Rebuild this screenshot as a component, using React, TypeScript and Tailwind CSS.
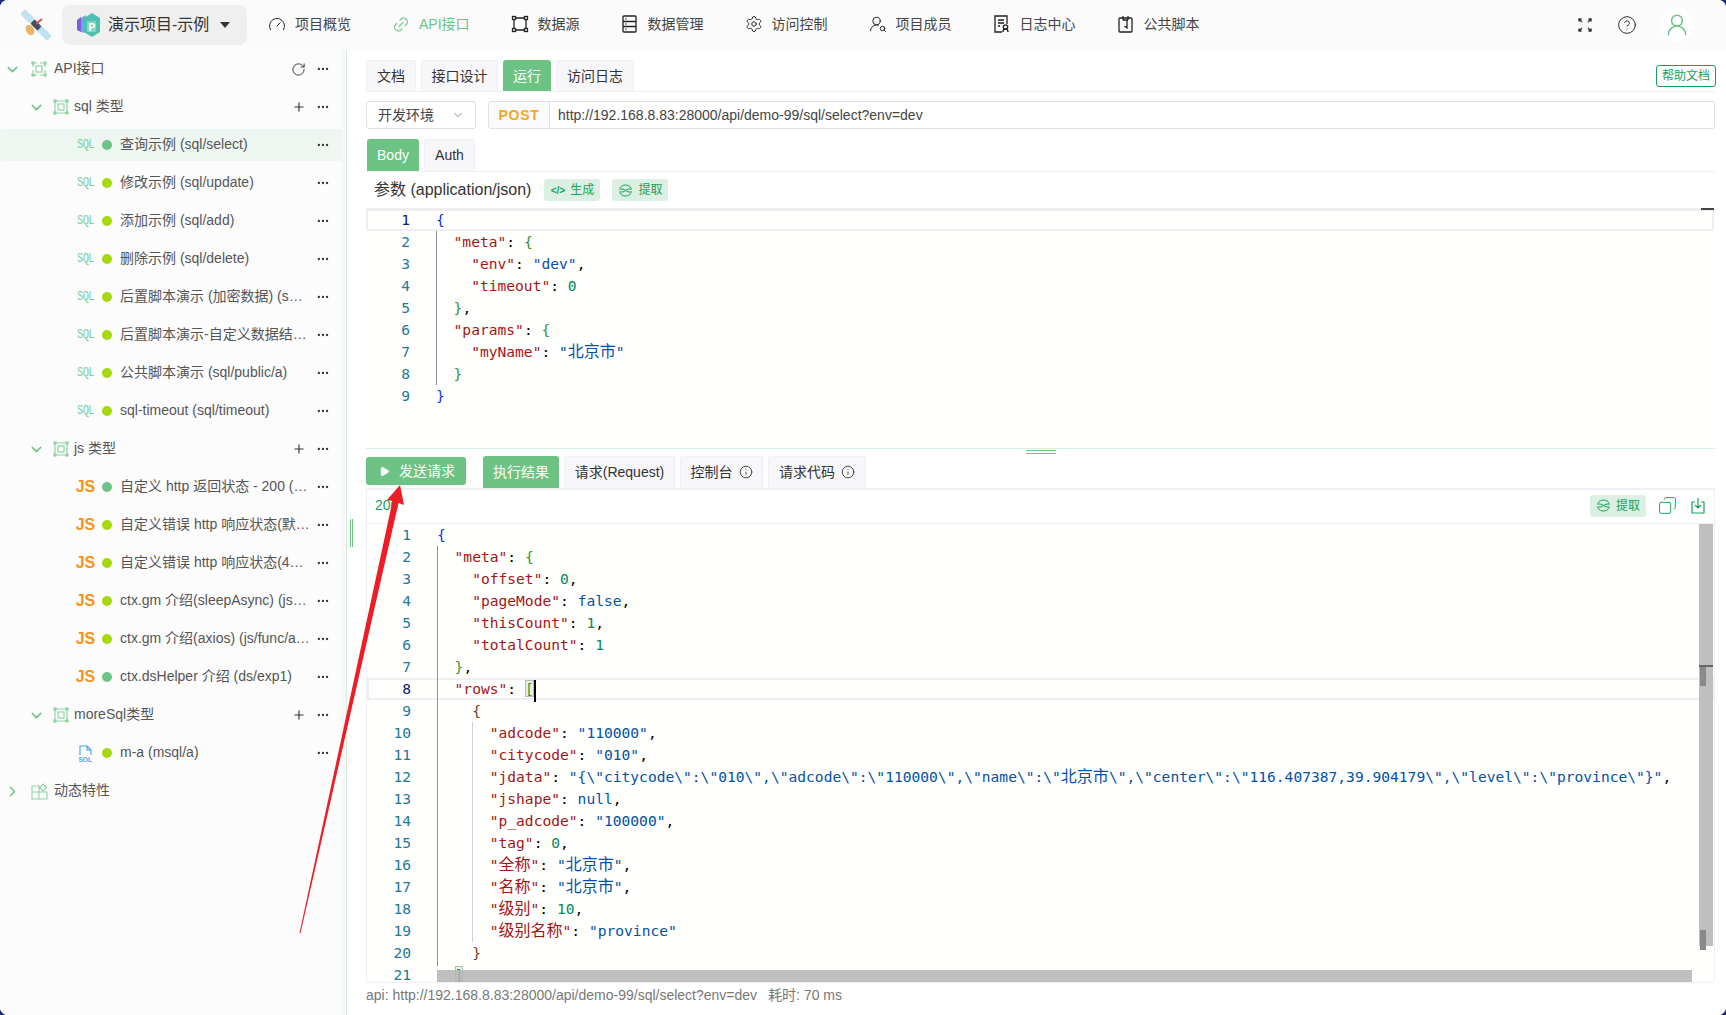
import { ChevronDown, ChevronRight, Ellipsis, Gauge, Link2, Play, Plus, RotateCw, Settings, UserRoundSearch, CircleHelp, UserRound, Copy, Info } from "lucide-react"

const green = "#6cc384"

const FrameIcon = () => (
    <svg width="18" height="18" viewBox="0 0 18 18" fill="none" stroke="#222" strokeWidth="1.3">
        <path d="M4 3h10M4 15h10M3 4v10M15 4v10" />
        <rect x="1.5" y="1.5" width="3" height="3" /><rect x="13.5" y="1.5" width="3" height="3" />
        <rect x="1.5" y="13.5" width="3" height="3" /><rect x="13.5" y="13.5" width="3" height="3" />
    </svg>
)
const TableIcon = () => (
    <svg width="15" height="18" viewBox="0 0 15 18" fill="none" stroke="#222" strokeWidth="1.3">
        <rect x="1" y="1" width="13" height="16" rx="1" /><path d="M1 6.5h13M1 11.5h13M3.5 4h1M3.5 9h1M3.5 14h1" />
    </svg>
)
const LogIcon = () => (
    <svg width="16" height="18" viewBox="0 0 16 18" fill="none" stroke="#222" strokeWidth="1.3">
        <path d="M8 17H1V1h12v8M4 5h6M4 8h6M4 11h2" /><circle cx="11.5" cy="12" r="2.2" /><path d="M9 17c0-4 5-4 5 0" />
    </svg>
)
const ScriptIcon = () => (
    <svg width="15" height="18" viewBox="0 0 15 18" fill="none" stroke="#222" strokeWidth="1.3">
        <rect x="1" y="3" width="13" height="14" rx="1" /><path d="M5 1v4M10 1v4M5 5h5M9 5v8l-2.5-2" />
    </svg>
)
const TreeIcon = ({ inner = false }: { inner?: boolean }) => (
    <svg width="16" height="16" viewBox="0 0 16 16" fill="none" stroke="#8fd3a5" strokeWidth="1.2">
        <path d="M3 2h10M3 14h10M2 3v10M14 3v10" strokeDasharray={inner ? undefined : "3 3"} />
        <rect x="5" y="5" width="6" height="6" /><rect x="1" y="1" width="2" height="2" fill="#8fd3a5" /><rect x="13" y="1" width="2" height="2" fill="#8fd3a5" />
        <rect x="1" y="13" width="2" height="2" fill="#8fd3a5" /><rect x="13" y="13" width="2" height="2" fill="#8fd3a5" />
    </svg>
)
const ExtractIcon = () => (
    <svg width="15" height="13" viewBox="0 0 15 13" fill="none" stroke="#18a058" strokeWidth="1">
        <path d="M2 4c2-4 9-4 11 0M2 9c2 4 9 4 11 0M1 5h3c3 0 4 3 7 3h3M1 8h3c3 0 4-3 7-3h3" />
    </svg>
)

const Row = ({ depth, icon, label, open, tail }: any) => (
    <div className="h-[38px] flex items-center relative">
        <span className={depth === 0 ? "ml-[4px] w-[27px]" : "ml-[28px] w-[25px]"}>
            {open ? <ChevronDown size={17} color={green} /> : <ChevronRight size={17} color={green} />}
        </span>
        <span className={`flex ${depth === 0 ? "w-[23px]" : "w-[21px]"}`}>{icon}</span>
        <span className="text-[14px] text-[#555] -translate-y-px">{label}</span>
        <span className="ml-auto mr-[12px] flex items-center gap-[10px] text-[#333]">
            {tail}
            <Ellipsis size={14} />
        </span>
    </div>
)

const FileRow = ({ kind, label, dot, active }: { kind: string; label: string; dot: string; active?: boolean }) => (
    <div className="h-[38px] py-[3px]">
        <div className={`h-[32px] flex items-center rounded-[3px] pl-[76px] pr-[12px] ${active ? "bg-[#eef6f1]" : ""}`}>
            <span className="w-[19px] flex justify-center">
                {kind === "sql" && <span className="text-[10.5px] text-[#7ccf98] tracking-[-0.6px] scale-y-125 [font-family:'Liberation_Mono',monospace]">SQL</span>}
                {kind === "js" && <span className="text-[16px] leading-none font-bold text-[#f7931a]">JS</span>}
                {kind === "msql" && (
                    <svg width="16" height="17" viewBox="0 0 16 17" fill="none" stroke="#4c9cf0" strokeWidth="1.1">
                        <path d="M2 10V1h7l4 4v5M9 1v4h4" />
                        <text x="0.5" y="16.5" fontSize="6.5" fontWeight="700" fill="#4c9cf0" stroke="none">SQL</text>
                    </svg>
                )}
            </span>
            <span className="ml-[7px] w-[10px] h-[10px] rounded-full shrink-0" style={{ background: dot }} />
            <span className="ml-[8px] w-[190px] truncate text-[14px] text-[#555] -translate-y-px">{label}</span>
            <Ellipsis size={14} className="ml-auto text-[#333]" />
        </div>
    </div>
)

const lime = "#a4d80f"
const sqlFiles = [
    ["查询示例 (sql/select)", green, true],
    ["修改示例 (sql/update)", lime],
    ["添加示例 (sql/add)", lime],
    ["删除示例 (sql/delete)", lime],
    ["后置脚本演示 (加密数据) (sql/encrypt)", lime],
    ["后置脚本演示-自定义数据结构 (sql/custom)", lime],
    ["公共脚本演示 (sql/public/a)", lime],
    ["sql-timeout (sql/timeout)", lime],
] as const
const jsFiles = [
    ["自定义 http 返回状态 - 200 (js/http/200)", green],
    ["自定义错误 http 响应状态(默认) (js/err)", lime],
    ["自定义错误 http 响应状态(4xx) (js/err/4)", lime],
    ["ctx.gm 介绍(sleepAsync) (js/func/sleep)", lime],
    ["ctx.gm 介绍(axios) (js/func/axios)", lime],
    ["ctx.dsHelper 介绍 (ds/exp1)", green],
] as const

const depthColors = ["#0431fa", "#319331", "#7b3814"]

// splits a string so Chinese gets the full 16px cell like the original editor font
const Cjk = ({ text, color }: { text: string; color: string }) => (
    <span style={{ color }}>
        {text.split(/([\u4e00-\u9fff]+)/).map((part, i) =>
            /[\u4e00-\u9fff]/.test(part)
                ? <span key={i} className="text-[16px] leading-none [font-family:'Noto_Sans_CJK_SC',sans-serif]">{part}</span>
                : part
        )}
    </span>
)

const renderLine = (line: string, state: { depth: number }, cursor: boolean) => {
    const out: any[] = []
    const re = /("(?:[^"\\]|\\.)*")(?=:)|("(?:[^"\\]|\\.)*")|(\d+)|(true|false|null)|([{}\[\]])|(\s+|.)/g
    let m: RegExpExecArray | null
    let i = 0
    while ((m = re.exec(line))) {
        i++
        if (m[1]) out.push(<Cjk key={i} text={m[1]} color="#a31515" />)
        else if (m[2]) out.push(<Cjk key={i} text={m[2]} color="#0451a5" />)
        else if (m[3]) out.push(<span key={i} className="text-[#098658]">{m[3]}</span>)
        else if (m[4]) out.push(<span key={i} className="text-[#0451a5]">{m[4]}</span>)
        else if (m[5]) {
            const closing = m[5] === "}" || m[5] === "]"
            if (closing) state.depth--
            const color = depthColors[state.depth % 3]
            if (!closing) state.depth++
            const square = cursor && (m[5] === "[" || m[5] === "]")
            out.push(
                <span key={i} className={square ? "relative bg-[#e6f1e6] outline outline-1 -outline-offset-1 outline-[#b9b9b9]" : ""} style={{ color }}>
                    {m[5]}
                    {m[5] === "[" && cursor && <span className="absolute top-0 -right-[2px] w-[2px] h-[22px] bg-black" />}
                </span>
            )
        } else out.push(m[6])
    }
    return out
}

const Editor = ({ lines, active, matchBrackets, children }: { lines: string[]; active: number; matchBrackets?: boolean; children?: any }) => {
    const state = { depth: 0 }
    return (
        <div className="relative flex-1 overflow-hidden bg-[#fffffe] text-[14.6px] leading-[22px] [font-family:'DejaVu_Sans_Mono',monospace] text-black">
            {lines.map((line, n) => (
                <div key={n} className="relative h-[22px] flex whitespace-pre">
                    {n + 1 === active && <div className="absolute inset-0 border-2 border-[#eeeeee]" />}
                    <span className={`relative w-[44px] text-right ${n + 1 === active ? "text-[#0b216f]" : "text-[#237893]"}`}>{n + 1}</span>
                    <span className="relative ml-[26px]">{renderLine(line, state, !!matchBrackets)}</span>
                </div>
            ))}
            {children}
        </div>
    )
}

const Tab = ({ active, children, className = "" }: any) => (
    <div className={`flex items-center justify-center gap-[6px] rounded-t-[3px] border border-b-0 text-[14px] ${active ? "bg-[#6cc384] border-[#6cc384] text-white" : "bg-[#f7f7fa] border-[#efeff5] text-[#333]"} ${className}`}>
        {children}
    </div>
)

const Tag = ({ icon, label, className = "" }: any) => (
    <div className={`h-[22px] flex items-center justify-center gap-[5px] rounded-[3px] bg-[#dbf0e3] text-[12px] text-[#18a058] ${className}`}>
        {icon}{label}
    </div>
)

const requestLines = [
    "{",
    '  "meta": {',
    '    "env": "dev",',
    '    "timeout": 0',
    "  },",
    '  "params": {',
    '    "myName": "北京市"',
    "  }",
    "}",
]

const responseLines = [
    "{",
    '  "meta": {',
    '    "offset": 0,',
    '    "pageMode": false,',
    '    "thisCount": 1,',
    '    "totalCount": 1',
    "  },",
    '  "rows": [',
    "    {",
    '      "adcode": "110000",',
    '      "citycode": "010",',
    '      "jdata": "{\\"citycode\\":\\"010\\",\\"adcode\\":\\"110000\\",\\"name\\":\\"北京市\\",\\"center\\":\\"116.407387,39.904179\\",\\"level\\":\\"province\\"}",',
    '      "jshape": null,',
    '      "p_adcode": "100000",',
    '      "tag": 0,',
    '      "全称": "北京市",',
    '      "名称": "北京市",',
    '      "级别": 10,',
    '      "级别名称": "province"',
    "    }",
    "  ]",
]

const nav = [
    { icon: <Gauge size={21} strokeWidth={1.3} color="#222" />, label: "项目概览" },
    { icon: <Link2 size={21} strokeWidth={1.5} color={green} className="-rotate-45" />, label: "API接口", active: true },
    { icon: <FrameIcon />, label: "数据源" },
    { icon: <TableIcon />, label: "数据管理" },
    { icon: <Settings size={20} strokeWidth={1.3} color="#222" />, label: "访问控制" },
    { icon: <UserRoundSearch size={20} strokeWidth={1.3} color="#222" />, label: "项目成员" },
    { icon: <LogIcon />, label: "日志中心" },
    { icon: <ScriptIcon />, label: "公共脚本" },
]

export default function App() {
    return (
        <div className="w-full h-[1015px] bg-[#1e2a78] overflow-hidden [font-family:'Liberation_Sans','Noto_Sans_CJK_SC',sans-serif]">
            <div className="relative h-full rounded-[8px] bg-white overflow-hidden">

                <header className="h-[50px] flex items-center bg-[#fbfbfc]">
                    <svg className="ml-[21px]" width="30" height="30" viewBox="0 0 30 30">
                        <g transform="rotate(-45 15 15)">
                            <rect x="11.500" y="-4" width="7" height="14" fill="#bfe3ee" />
                            <rect x="11.500" y="20" width="7" height="14" fill="#bfe3ee" />
                            <rect x="12" y="10" width="6" height="10" rx="1" fill="#3f4f66" />
                        </g>
                        <ellipse cx="9" cy="20" rx="4" ry="5.500" fill="#eab566" transform="rotate(-30 9 20)" />
                        <path d="M15 14l6-5" stroke="#d9533f" strokeWidth="2" />
                    </svg>
                    <div className="ml-[11px] w-[185px] h-[40px] rounded-[8px] bg-[#efefef] flex items-center pl-[15px]">
                        <svg width="23" height="24" viewBox="0 0 23 24">
                            <path d="M0 7l4-3v15l-4-2z" fill="#7b5be0" />
                            <path d="M4 5l5-3v18l-5-1z" fill="#6fa4e6" />
                            <path d="M15 0l8 5v14l-8 5-8-5V5z" fill="#4fc0ae" />
                            <rect x="10" y="8" width="9" height="11" fill="#7fd6c6" />
                            <text x="11.500" y="17.500" fontSize="10" fontWeight="700" fill="#fff">P</text>
                        </svg>
                        <span className="ml-[8px] text-[16px] text-[#333]">演示项目-示例</span>
                        <span className="ml-[11px] w-0 h-0 border-x-[5px] border-x-transparent border-t-[6px] border-t-[#333]" />
                    </div>
                    <nav className="ml-[21px] pb-[2px] flex items-center gap-[41px]">
                        {nav.map((item) => (
                            <div key={item.label} className={`flex items-center gap-[9px] text-[14px] ${item.active ? "text-[#6cc384]" : "text-[#444]"}`}>
                                <span className="w-[18px] flex justify-center">{item.icon}</span>
                                {item.label}
                            </div>
                        ))}
                    </nav>
                    <div className="ml-auto flex items-center mr-[32px]">
                        <svg width="14" height="14" viewBox="0 0 14 14" fill="none" stroke="#333" strokeWidth="1.4">
                            <path d="M1 1l3 3M13 1l-3 3M1 13l3-3M13 13l-3-3M1 3.500V1h2.500M13 3.500V1h-2.500M1 10.500V13h2.500M13 10.500V13h-2.500" />
                        </svg>
                        <CircleHelp size={20} strokeWidth={1.2} color="#333" className="ml-[25px]" />
                        <div className="ml-[23px] w-[34px] h-[34px] rounded-full bg-white flex items-center justify-center">
                            <UserRound size={26} strokeWidth={1.4} color={green} />
                        </div>
                    </div>
                </header>

                <div className="flex h-[965px]">
                    <aside className="w-[347px] flex border-r border-[#d5ebdd] bg-[#f8f8f9]">
                        <div className="w-[342px] bg-[#fcfcfd] h-full">
                            <Row depth={0} open icon={<TreeIcon />} label="API接口" tail={<RotateCw size={15} strokeWidth={1.5} />} />
                            <Row depth={1} open icon={<TreeIcon inner />} label="sql 类型" tail={<Plus size={14} />} />
                            {sqlFiles.map((f: any) => <FileRow key={f[0]} kind="sql" label={f[0]} dot={f[1]} active={f[2]} />)}
                            <Row depth={1} open icon={<TreeIcon inner />} label="js 类型" tail={<Plus size={14} />} />
                            {jsFiles.map((f) => <FileRow key={f[0]} kind="js" label={f[0]} dot={f[1]} />)}
                            <Row depth={1} open icon={<TreeIcon inner />} label="moreSql类型" tail={<Plus size={14} />} />
                            <FileRow kind="msql" label="m-a (msql/a)" dot={lime} />
                            <div className="h-[38px] flex items-center">
                                <span className="ml-[4px] w-[27px]"><ChevronRight size={17} color={green} /></span>
                                <svg width="17" height="17" viewBox="0 0 17 17" fill="none" stroke="#8fd3a5" strokeWidth="1.1" className="mr-[6px]">
                                    <path d="M1 3h7v13H1zM8 9h8v7H8zM1 9h7M12 1l3.500 3.500L12 8 8.500 4.500z" />
                                </svg>
                                <span className="text-[14px] text-[#555] -translate-y-px">动态特性</span>
                            </div>
                        </div>
                    </aside>

                    <main className="ml-[8px] flex-1 pl-[11px] pr-[11px] pt-[10px] bg-white flex flex-col">
                        <div className="h-[32px] flex items-stretch gap-[5px] border-b border-[#efeff5] shrink-0">
                            <Tab className="w-[50px]">文档</Tab>
                            <Tab className="w-[77px]">接口设计</Tab>
                            <Tab active className="w-[48px]">运行</Tab>
                            <Tab className="w-[78px]">访问日志</Tab>
                            <div className="ml-auto h-[22px] mt-[5px] w-[60px] mr-[-1px] rounded-[3px] border border-[#18a058] text-[12px] text-[#18a058] flex items-center justify-center">帮助文档</div>
                        </div>

                        <div className="mt-[9px] h-[28px] flex shrink-0">
                            <div className="w-[110px] rounded-[3px] border border-[#e0e0e6] flex items-center pl-[11px] text-[14px] text-[#444]">
                                开发环境
                                <ChevronDown size={14} color="#c2c2c2" className="ml-[17px]" />
                            </div>
                            <div className="ml-[12px] w-[62px] rounded-l-[3px] border border-[#e0e0e6] bg-[#fafafc] flex items-center justify-center text-[14px] font-bold tracking-[0.7px] text-[#f5a623]">POST</div>
                            <div className="flex-1 rounded-r-[3px] border border-l-0 border-[#e0e0e6] flex items-center pl-[8px] text-[14px] text-[#444]">http://192.168.8.83:28000/api/demo-99/sql/select?env=dev</div>
                        </div>

                        <div className="mt-[10px] h-[33px] pl-px flex items-stretch gap-[5px] border-b border-[#efeff5] shrink-0">
                            <Tab active className="w-[52px]">Body</Tab>
                            <Tab className="w-[51px]">Auth</Tab>
                        </div>

                        <div className="h-[36px] flex items-center pl-[8px] shrink-0">
                            <span className="text-[16px] text-[#333]">参数 (application/json)</span>
                            <Tag className="ml-[13px] w-[56px]" icon={<span className="text-[10px] font-bold">&lt;/&gt;</span>} label="生成" />
                            <Tag className="ml-[12px] w-[56px]" icon={<ExtractIcon />} label="提取" />
                        </div>

                        <div className="relative h-[240px] flex flex-col border-t border-[#eeeeee] mr-[1px] shrink-0">
                            <Editor lines={requestLines} active={1}>
                                <div className="absolute left-[70px] top-[22px] h-[154px] w-px bg-[#939393]" />
                            </Editor>
                            <div className="absolute right-0 -top-[1px] w-[13px] h-[2px] bg-[#444]" />
                        </div>

                        <div className="relative h-[1px] bg-[#d5f0df] shrink-0">
                            <div className="absolute left-[660px] top-[2px] w-[30px] h-[4px] border-y border-[#6cc384]" />
                        </div>

                        <div className="mt-[7px] h-[32px] flex items-stretch gap-[5px] shrink-0">
                            <button className="w-[100px] h-[28px] mt-[1px] rounded-[3px] bg-[#6cc384] text-white text-[14px] flex items-center">
                                <Play size={11} fill="white" className="ml-[13px] mr-[9px]" />
                                发送请求
                            </button>
                            <Tab active className="ml-[12px] w-[76px] pb-px">执行结果</Tab>
                            <Tab className="w-[111px] pb-px">请求(Request)</Tab>
                            <Tab className="w-[83px] pb-px">控制台 <Info size={14} strokeWidth={1.5} /></Tab>
                            <Tab className="w-[98px] pb-px">请求代码 <Info size={14} strokeWidth={1.5} /></Tab>
                        </div>

                        <div className="relative h-[495px] flex flex-col border border-t-2 border-[#efeff5] rounded-b-[3px] shrink-0 overflow-hidden">
                            <div className="h-[34px] pb-[2px] flex items-center border-b border-[#efeff5] pl-[8px] pr-[9px] shrink-0">
                                <span className="text-[14px] text-[#18a058]">200</span>
                                <Tag className="ml-auto w-[56px]" icon={<ExtractIcon />} label="提取" />
                                <Copy size={19} strokeWidth={1.2} color="#18a058" className="ml-[12px] -scale-x-100" />
                                <svg className="ml-[14px]" width="14" height="17" viewBox="0 0 14 17" fill="none" stroke="#18a058" strokeWidth="1.2">
                                    <path d="M4 5H1v11h12V5h-3M7 1v10M4 8l3 3 3-3" />
                                </svg>
                            </div>
                            <Editor lines={responseLines} active={8} matchBrackets>
                                <div className="absolute left-[70px] top-[22px] h-[420px] w-px bg-[#939393]" />
                                <div className="absolute left-[105px] top-[198px] h-[220px] w-px bg-[#d3d3d3]" />
                                <div className="absolute left-[70px] right-[22px] bottom-0 h-[12px] bg-[#b4b4b4]/85" />
                                <div className="absolute right-[1px] top-0 w-[14px] h-[422px] bg-[#bfbfbf]">
                                    <div className="absolute left-0 right-0 top-[141px] h-[2px] bg-[#666]" />
                                    <div className="absolute left-[1px] top-[143px] w-[6px] h-[19px] bg-[#8a8a8a]" />
                                    <div className="absolute left-[1px] top-[406px] w-[6px] h-[20px] bg-[#8a8a8a]" />
                                </div>
                            </Editor>
                        </div>

                        <div className="mt-[2px] text-[14px] text-[#777] h-[20px] leading-[20px]">
                            api: http://192.168.8.83:28000/api/demo-99/sql/select?env=dev<span className="ml-[11px]">耗时: 70 ms</span>
                        </div>
                    </main>
                </div>

                {/* sidebar resize grip */}
                <div className="absolute left-[350px] top-[519px] w-[3px] h-[28px] border-x border-[#6cc384]" />

                {/* red annotation arrow */}
                <svg className="absolute inset-0 pointer-events-none" width="1726" height="1015">
                    <polygon points="400,485 404,505 398.500,503 300.500,933 299.500,933 392.500,501 387,500" fill="#ee1c25" />
                </svg>
            </div>
        </div>
    )
}
